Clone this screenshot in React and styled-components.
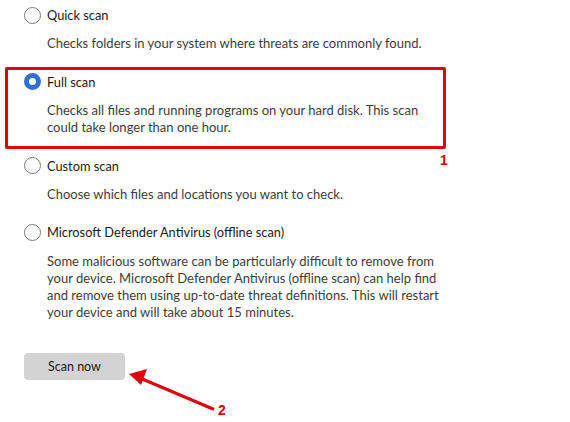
import React from 'react';
import styled, { createGlobalStyle } from 'styled-components';

const GlobalStyle = createGlobalStyle`
  html, body {
    margin: 0;
    padding: 0;
    background: #ffffff;
  }
  body {
    font-family: Lato, "Noto Sans", "Liberation Sans", sans-serif;
  }
`;

const Page = styled.div`
  position: relative;
  width: 570px;
  height: 422px;
  overflow: hidden;
  box-sizing: border-box;
  padding: 5px 0 0 24px;
  display: flex;
  flex-direction: column;
  gap: 19.5px;
`;

const Option = styled.div`
  position: relative;
  display: flex;
  flex-direction: column;
  gap: 10.25px;
`;

const Row = styled.label`
  display: flex;
  align-items: center;
  gap: 6px;
  height: 20px;
  font-size: 12.8px;
  color: #1b1b1b;
`;

const Radio = styled.span`
  box-sizing: border-box;
  width: 17px;
  height: 17px;
  border-radius: 50%;
  flex: none;
  border: ${(p) => (p.$checked ? '5px solid #2e71d0' : '1px solid #7a7a7a')};
  background: #ffffff;
`;

const Desc = styled.p`
  margin: 0 0 0 23px;
  font-size: 13px;
  line-height: 17px;
  color: #3d3d3d;
  white-space: pre-line;
`;

const Highlight = styled.div`
  position: absolute;
  left: -19px;
  top: -5px;
  width: 441px;
  height: 82px;
  box-sizing: border-box;
  border: 3px solid #e1000b;
  border-radius: 2px;
  pointer-events: none;
`;

const Marker = styled.span`
  position: absolute;
  font-family: "Liberation Sans", Arial, sans-serif;
  font-weight: 700;
  font-size: 14px;
  line-height: 1;
  color: #d9000a;
  text-shadow: 1px 1px 0 #fff, -1px -1px 0 #fff, 1px -1px 0 #fff, -1px 1px 0 #fff;
`;

const ButtonRow = styled.div`
  margin-top: 12.5px;
`;

const Button = styled.button`
  width: 101px;
  height: 27px;
  border: none;
  border-radius: 4px;
  background: #d3d3d3;
  font-family: inherit;
  font-size: 12.5px;
  color: #1b1b1b;
  padding: 0;
`;

const ArrowSvg = styled.svg`
  position: absolute;
  left: 0;
  top: 0;
  pointer-events: none;
`;

const options = [
  {
    label: 'Quick scan',
    desc: 'Checks folders in your system where threats are commonly found.',
  },
  {
    label: 'Full scan',
    desc: 'Checks all files and running programs on your hard disk. This scan\ncould take longer than one hour.',
    checked: true,
  },
  {
    label: 'Custom scan',
    desc: 'Choose which files and locations you want to check.',
  },
  {
    label: 'Microsoft Defender Antivirus (offline scan)',
    desc: 'Some malicious software can be particularly difficult to remove from\nyour device. Microsoft Defender Antivirus (offline scan) can help find\nand remove them using up-to-date threat definitions. This will restart\nyour device and will take about 15 minutes.',
  },
];

export default function App() {
  return (
    <>
      <GlobalStyle />
      <Page>
        {options.map((o) => (
          <Option key={o.label}>
            <Row>
              <Radio $checked={o.checked} />
              {o.label}
            </Row>
            <Desc>{o.desc}</Desc>
            {o.checked && <Highlight />}
          </Option>
        ))}
        <ButtonRow>
          <Button>Scan now</Button>
        </ButtonRow>
        <ArrowSvg width="570" height="422" viewBox="0 0 570 422">
          <line x1="213" y1="409" x2="140" y2="378" stroke="#e1000b" strokeWidth="3" strokeLinecap="round" />
          <polygon points="129,374 147,369 141,385" fill="#e1000b" />
        </ArrowSvg>
        <Marker style={{ left: 440, top: 153 }}>1</Marker>
        <Marker style={{ left: 218, top: 403 }}>2</Marker>
      </Page>
    </>
  );
}
